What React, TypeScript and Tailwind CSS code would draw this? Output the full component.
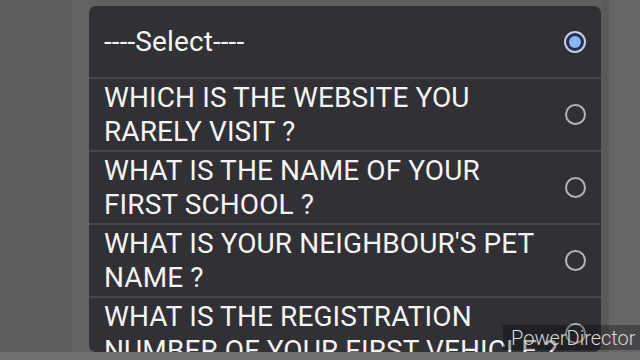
const options = [
  { id: 'none', lines: ['----Select----'], selected: true },
  { id: 'website', lines: ['WHICH IS THE WEBSITE YOU', 'RARELY VISIT ?'] },
  { id: 'school', lines: ['WHAT IS THE NAME OF YOUR', 'FIRST SCHOOL ?'] },
  { id: 'pet', lines: ["WHAT IS YOUR NEIGHBOUR'S PET", 'NAME ?'] },
  { id: 'vehicle', lines: ['WHAT IS THE REGISTRATION', 'NUMBER OF YOUR FIRST VEHICLE ?'] }
]

function Radio ({ checked }: { checked?: boolean }) {
  if (checked) {
    return (
      <div className="flex h-[22px] w-[22px] shrink-0 items-center justify-center rounded-full border-2 border-[#c3cdee] bg-[#27314d]">
        <div className="h-[12px] w-[12px] rounded-full bg-[#8ab4f8]" />
      </div>
    )
  }
  return <div className="h-[21px] w-[21px] shrink-0 rounded-full border-2 border-[#b4b4b8]" />
}

export default function App () {
  return (
    <div className="relative flex h-[360px] w-[640px] flex-col overflow-hidden bg-[#606060] font-['Roboto',sans-serif]">
      <div className="flex flex-1 overflow-hidden">
        <div className="w-[72px] bg-[#5d5d5d]" />
        <div className="w-[17px] bg-[#646464]" />

        <div className="mt-[6px] flex w-[512px] flex-col overflow-hidden rounded-[7px] bg-[#303035]">
          {options.map((opt, i) => (
            <div
              key={opt.id}
              className={
                i === 0
                  ? 'flex h-[71px] shrink-0 items-center justify-between pl-[15px] pr-[15px]'
                  : 'flex h-[73px] shrink-0 items-center justify-between border-t-2 border-[#46464b] pl-[15px] pr-[15px]'
              }
            >
              <div className="whitespace-nowrap text-[28px] leading-[34px] tracking-[0.1px] text-[#f4f4f4]">
                {opt.lines.map((line) => (
                  <div key={line}>{line}</div>
                ))}
              </div>
              <Radio checked={opt.selected} />
            </div>
          ))}
        </div>

        <div className="w-[8px] bg-[#5b5b5b]" />
        <div className="flex-1 bg-[#666666]" />
      </div>
      <div className="h-[8px] bg-[#6e6e6e]" />

      <div className="absolute bottom-[10px] right-0 flex h-[25px] w-[137px] items-center bg-black/30 pl-[8px]">
        <span className="text-[20px] font-light leading-none text-[#d8d8d8]">PowerDirector</span>
      </div>
    </div>
  )
}
